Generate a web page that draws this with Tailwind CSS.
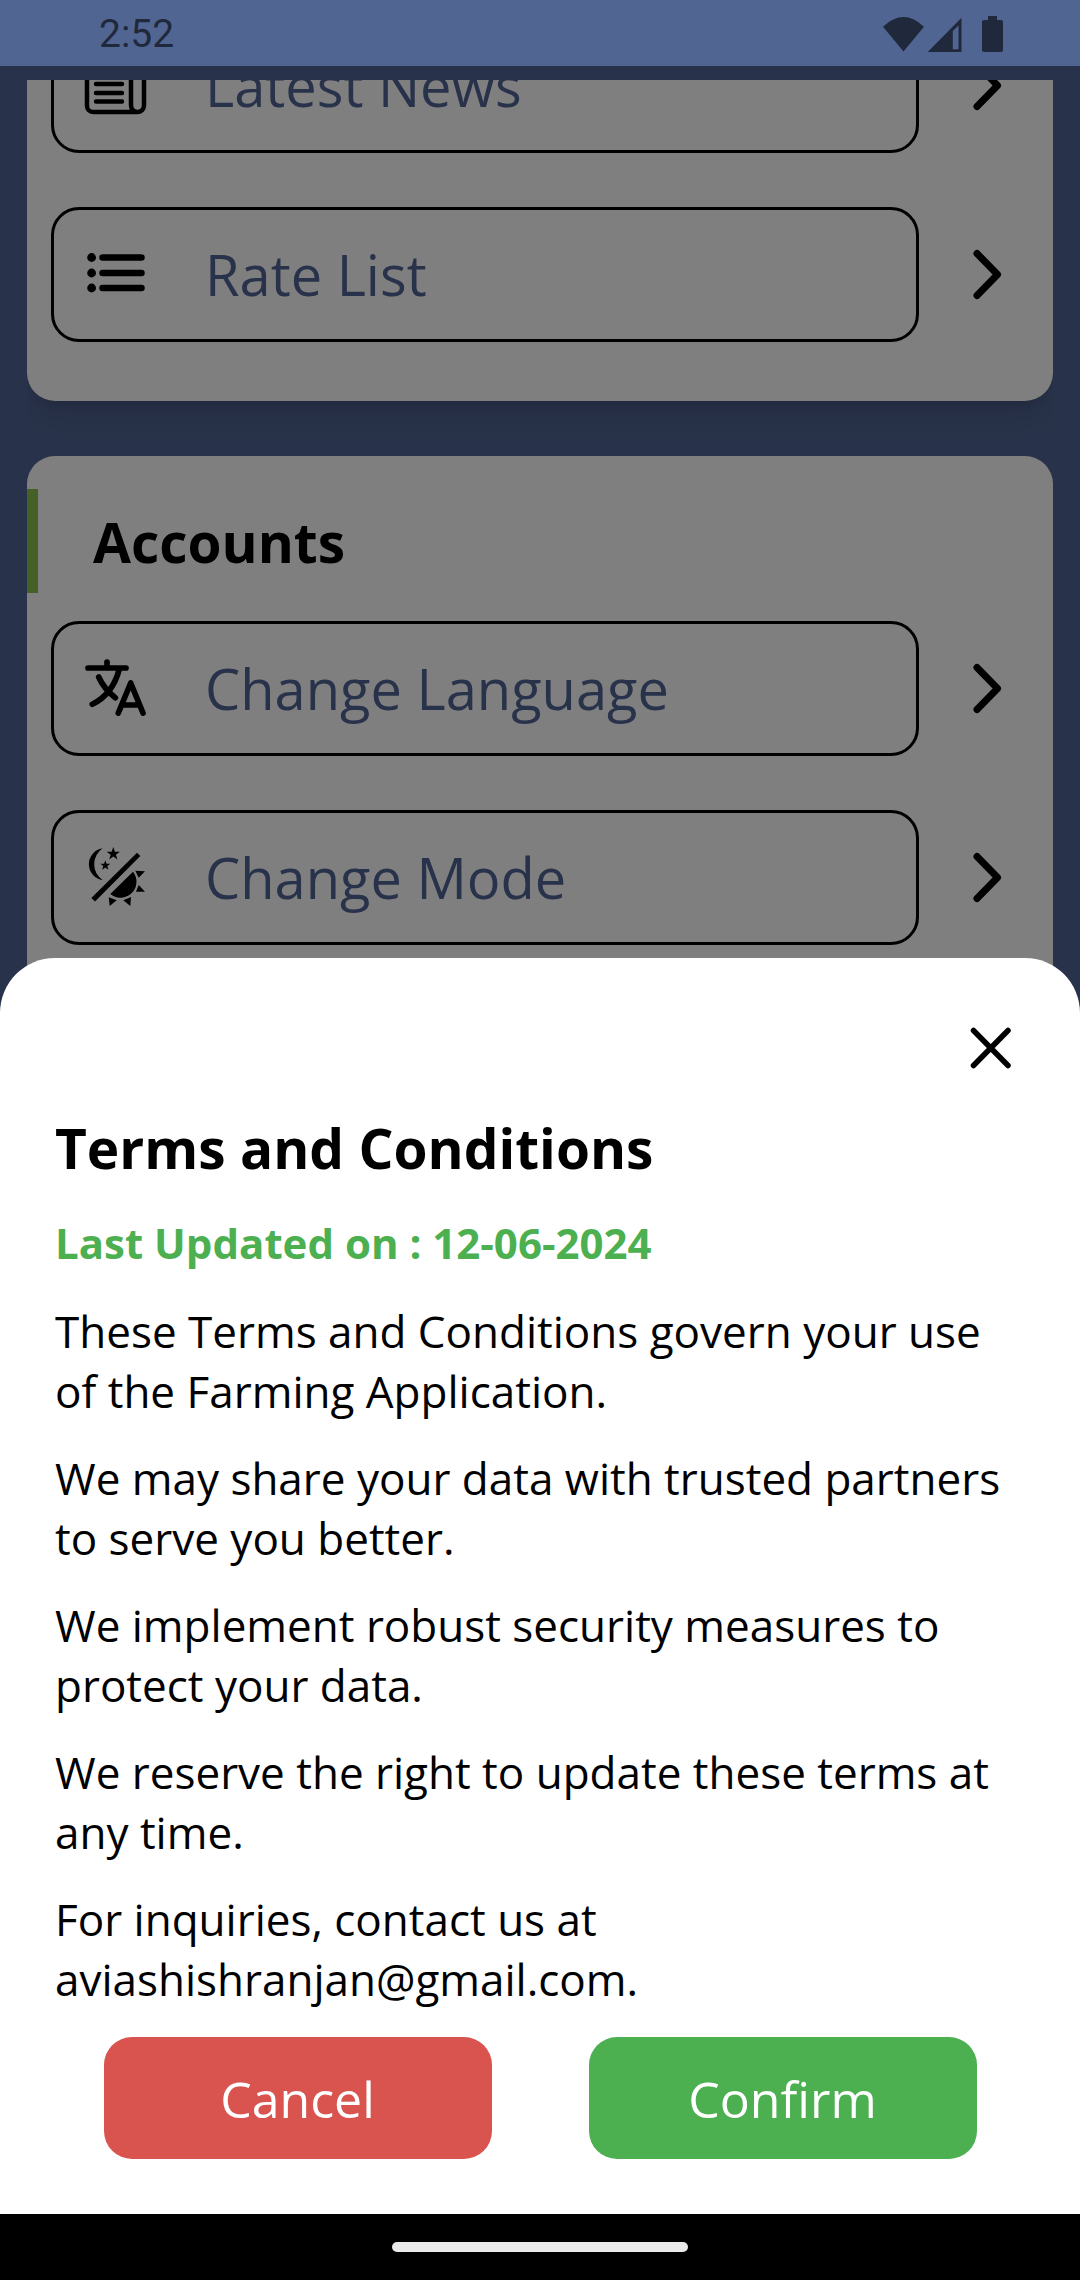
<!DOCTYPE html>
<html lang="en">
<head>
<meta charset="utf-8">
<meta name="viewport" content="width=device-width, initial-scale=1">
<title>Terms and Conditions</title>
<script src="https://cdn.jsdelivr.net/npm/@tailwindcss/browser@4"></script>
</head>
<body class="flex h-screen flex-col overflow-hidden bg-black font-['Open_Sans','Noto_Sans',sans-serif] text-black">

  <!-- Status bar -->
  <header class="flex h-[66px] shrink-0 items-center justify-between bg-[#516592] pr-[77px] pl-[99px] text-[#20293c]">
    <time class="font-['Roboto',sans-serif] pt-[2px] text-[39px] leading-[48px]">2:52</time>
    <svg class="h-[66px] w-[120px]" viewBox="883 0 120 66" fill="currentColor" role="img" aria-label="Wi-Fi, mobile signal and battery">
      <path d="M903.500 51.500 883 26.700Q903.500 7.500 924 26.700Z"/>
      <path fill-rule="evenodd" d="M961.500 17.700V52H927.700ZM952.800 31V49.300H958.500V25.500Z"/>
      <path d="M988 16h9v4h4q2 0 2 2v28q0 2-2 2h-17q-2 0-2-2V22q0-2 2-2h4z"/>
    </svg>
  </header>

  <main class="relative flex-1 overflow-hidden bg-[#516594] pt-[14px]">

    <!-- Scrolled menu -->
    <div class="mx-[27px] flex h-full flex-col gap-[55px] overflow-hidden">
      <section class="-mt-[62px] flex shrink-0 flex-col gap-[54px] rounded-b-[28px] bg-white pb-[59px] shadow-xl">
        <a href="#news" class="flex items-center gap-[34px] pr-[31px] pl-6">
          <span class="flex h-[135px] flex-1 items-center gap-[55px] rounded-[28px] border-3 border-black pl-7 text-[56px] leading-[75px] font-medium text-[#516594]">
            <svg class="size-[68px] text-black" viewBox="0 0 68 68" fill="none" stroke="currentColor" stroke-width="4.500" stroke-linecap="round" stroke-linejoin="round" aria-hidden="true">
              <path d="M55.500 60H11a6 6 0 0 1-6-6V12a5 5 0 0 1 5-5h34a5 5 0 0 1 5 5v41.500a6.500 6.500 0 0 0 13 0V19H49"/>
              <path d="M14 32h26M14 41h26M14 49.500h26"/>
            </svg>
            Latest News
          </span>
          <svg class="size-[69px]" viewBox="0 0 69 69" fill="none" stroke="currentColor" stroke-width="7" stroke-linecap="round" stroke-linejoin="round" aria-hidden="true"><path d="M24 13.500 44.500 34.500 24 55.500"/></svg>
        </a>
        <a href="#rates" class="flex items-center gap-[34px] pr-[31px] pl-6">
          <span class="flex h-[135px] flex-1 items-center gap-[55px] rounded-[28px] border-3 border-black pl-7 text-[56px] leading-[75px] font-medium text-[#516594]">
            <svg class="size-[68px] text-black" viewBox="0 0 68 68" fill="none" stroke="currentColor" stroke-width="6.500" stroke-linecap="round" aria-hidden="true">
              <path d="M20.500 16.500h39M20.500 32h39M20.500 47h39"/>
              <g fill="currentColor" stroke="none"><circle cx="9.600" cy="16.500" r="4.400"/><circle cx="9.600" cy="32" r="4.400"/><circle cx="9.600" cy="47" r="4.400"/></g>
            </svg>
            Rate List
          </span>
          <svg class="size-[69px]" viewBox="0 0 69 69" fill="none" stroke="currentColor" stroke-width="7" stroke-linecap="round" stroke-linejoin="round" aria-hidden="true"><path d="M24 13.500 44.500 34.500 24 55.500"/></svg>
        </a>
      </section>

      <section class="flex shrink-0 flex-col gap-[54px] rounded-[28px] bg-white pt-[33px] pb-[59px] shadow-xl">
        <h2 class="-mb-[26px] flex h-[104px] items-center border-l-11 border-[#8bc34a] pl-[55px] text-[55px] leading-[75px] font-bold">Accounts</h2>
        <a href="#language" class="flex items-center gap-[34px] pr-[31px] pl-6">
          <span class="flex h-[135px] flex-1 items-center gap-[55px] rounded-[28px] border-3 border-black pl-7 text-[56px] leading-[75px] font-medium text-[#516594]">
            <svg class="size-[68px] text-black" viewBox="0 0 68 68" fill="none" stroke="currentColor" stroke-width="5.700" stroke-linecap="round" stroke-linejoin="round" aria-hidden="true">
              <path d="M6 13H44M25 7V13M37.300 14Q31 39 10.300 49.300M16.700 22Q22 34 33.300 42.700"/>
              <path d="M36.300 58 48.700 28 61 58M40 50H57.500"/>
            </svg>
            Change Language
          </span>
          <svg class="size-[69px]" viewBox="0 0 69 69" fill="none" stroke="currentColor" stroke-width="7" stroke-linecap="round" stroke-linejoin="round" aria-hidden="true"><path d="M24 13.500 44.500 34.500 24 55.500"/></svg>
        </a>
        <a href="#mode" class="flex items-center gap-[34px] pr-[31px] pl-6">
          <span class="flex h-[135px] flex-1 items-center gap-[55px] rounded-[28px] border-3 border-black pl-7 text-[56px] leading-[75px] font-medium text-[#516594]">
            <svg class="size-[68px] text-black" viewBox="0 0 68 68" fill="currentColor" aria-hidden="true">
              <path d="M20.700 4.300A16 16 0 0 0 20.700 36A19 19 0 0 1 20.700 4.300Z"/>
              <path d="M31.300 3l1.600 4.700h5l-4 3 1.500 4.800-4.100-2.900-4.100 2.900 1.500-4.800-4-3h5z"/>
              <path d="M23.300 16.200l1.200 3.600h3.800l-3 2.300 1.100 3.700-3.100-2.200-3.100 2.200 1.100-3.700-3-2.300h3.800z"/>
              <path d="M55 8.700 58.300 12 13 57.500 9.300 54Z"/>
              <path d="M51 27.700A16 16 0 0 1 28.300 50Z"/>
              <path d="M53.300 26.700 63 27.300 56.700 33.700ZM56.700 41 63 47.700 54 47.700ZM49 53 48.300 62 41.300 56.300ZM26.700 53.300 34.700 56.300 27.700 62Z"/>
            </svg>
            Change Mode
          </span>
          <svg class="size-[69px]" viewBox="0 0 69 69" fill="none" stroke="currentColor" stroke-width="7" stroke-linecap="round" stroke-linejoin="round" aria-hidden="true"><path d="M24 13.500 44.500 34.500 24 55.500"/></svg>
        </a>
      </section>
    </div>

    <!-- Scrim and bottom sheet -->
    <div class="absolute inset-0 bg-black/50"></div>
    <section role="dialog" aria-modal="true" aria-labelledby="terms-title" class="absolute inset-x-0 bottom-0 flex flex-col rounded-t-[55px] bg-white p-[55px]">
      <button type="button" aria-label="Close" class="mb-7 self-end">
        <svg class="size-[69px]" viewBox="0 0 69 69" fill="none" stroke="currentColor" stroke-width="5.500" stroke-linecap="round" aria-hidden="true"><path d="M17.500 17.500 52 52.500M52 17.500 17.500 52.500"/></svg>
      </button>
      <h1 id="terms-title" class="mb-7 text-[55px] leading-[75px] font-bold">Terms and Conditions</h1>
      <p class="mb-7 text-[42px] leading-[60px] font-bold text-[#4caf50]">Last Updated on : 12-06-2024</p>
      <div class="flex flex-col gap-[27px] text-[44px] leading-[60px]">
        <p>These Terms and Conditions govern your use of the Farming Application.</p>
        <p>We may share your data with trusted partners to serve you better.</p>
        <p>We implement robust security measures to protect your data.</p>
        <p>We reserve the right to update these terms at any time.</p>
        <p>For inquiries, contact us at aviashishranjan@gmail.com.</p>
      </div>
      <div class="mt-7 flex justify-around text-[50px] leading-[68px] font-medium text-white">
        <button type="button" class="w-2/5 rounded-[28px] bg-[#d9534f] pt-7 pb-[26px]">Cancel</button>
        <button type="button" class="w-2/5 rounded-[28px] bg-[#4caf50] pt-7 pb-[26px]">Confirm</button>
      </div>
    </section>
  </main>

  <!-- Gesture bar -->
  <footer class="flex h-[66px] shrink-0 items-center justify-center bg-black">
    <div class="h-[10px] w-[296px] rounded-[5px] bg-[#ebebeb]"></div>
  </footer>
</body>
</html>
